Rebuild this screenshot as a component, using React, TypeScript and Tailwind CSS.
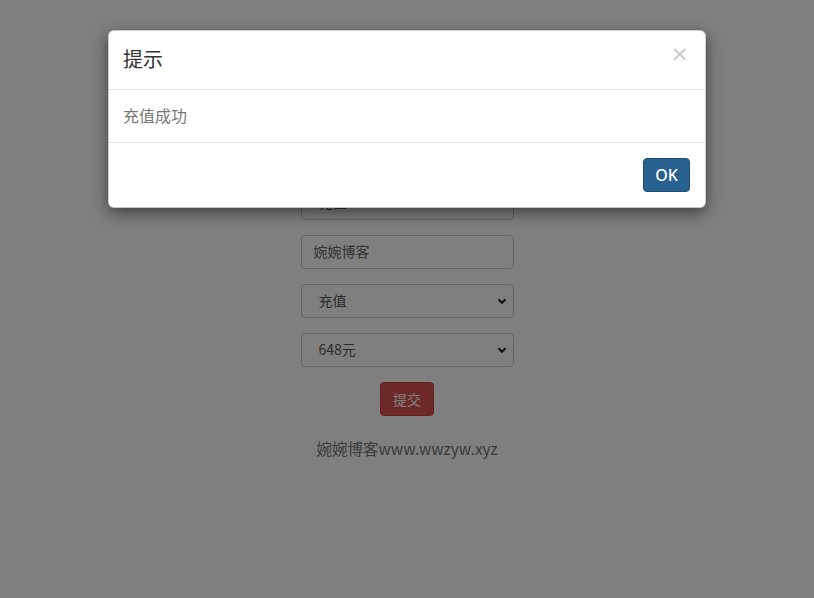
import React from "react";

const font = { fontFamily: '"Noto Sans CJK SC", "Noto Sans", sans-serif' };

function Chevron() {
  return (
    <svg
      className="pointer-events-none absolute right-[6px] top-1/2 -translate-y-1/2"
      width="10"
      height="10"
      viewBox="0 0 10 10"
    >
      <path d="M1.5 3.2 L5 6.8 L8.5 3.2" fill="none" stroke="#222" strokeWidth="2" />
    </svg>
  );
}

function SelectBox({ value }: { value: string }) {
  return (
    <div className="relative h-[34px] w-[213px] rounded-[4px] border border-[#ccc] bg-white">
      <div className="flex h-full items-center pl-[17px] pb-[1px] text-[14px] text-[#555]">{value}</div>
      <Chevron />
    </div>
  );
}

function InputBox({ value }: { value: string }) {
  return (
    <div className="flex h-[34px] w-[213px] items-center rounded-[4px] border border-[#ccc] bg-white pl-[12px] pb-[1px] text-[14px] text-[#666]">
      {value}
    </div>
  );
}

export default function App() {
  return (
    <div className="relative h-[598px] w-[814px] overflow-hidden bg-white" style={font}>
      <div className="flex flex-col items-center gap-[15px] pt-[137px]">
        <InputBox value="账号" />
        <SelectBox value="充值" />
        <InputBox value="婉婉博客" />
        <SelectBox value="充值" />
        <SelectBox value="648元" />
        <button className="h-[34px] w-[54px] rounded-[4px] border border-[#d43f3a] bg-[#d9534f] text-[14px] text-white">
          提交
        </button>
        <div className="mt-[6px] text-[15.5px] text-[#777]">婉婉博客www.wwzyw.xyz</div>
      </div>

      <div className="absolute inset-0 bg-black/50">
        <div className="mx-auto mt-[30px] w-[598px] rounded-[6px] border border-black/20 bg-white shadow-[0_5px_15px_rgba(0,0,0,0.5)]">
          <div className="flex h-[59px] items-start justify-between border-b border-[#e5e5e5] px-[14px] py-[15px]">
            <div className="mt-[-1px] text-[20px] leading-[28px] text-[#333]">提示</div>
            <div
              className="mt-[-6px] mr-[2px] text-[22px] leading-[28px] text-[#c8c8c8]"
              style={{ fontFamily: '"DejaVu Sans", sans-serif' }}
            >
              ×
            </div>
          </div>
          <div className="h-[53px] border-b border-[#e5e5e5] px-[14px] py-[15px] text-[16px] leading-[21px] text-[#777]">
            充值成功
          </div>
          <div className="flex justify-end px-[15px] py-[15px]">
            <button
              className="h-[34px] w-[47px] rounded-[4px] border border-[#204d74] bg-[#286090] text-[16px] font-medium text-white"
              style={{ fontFamily: '"Noto Sans", sans-serif' }}
            >
              OK
            </button>
          </div>
        </div>
      </div>
    </div>
  );
}
